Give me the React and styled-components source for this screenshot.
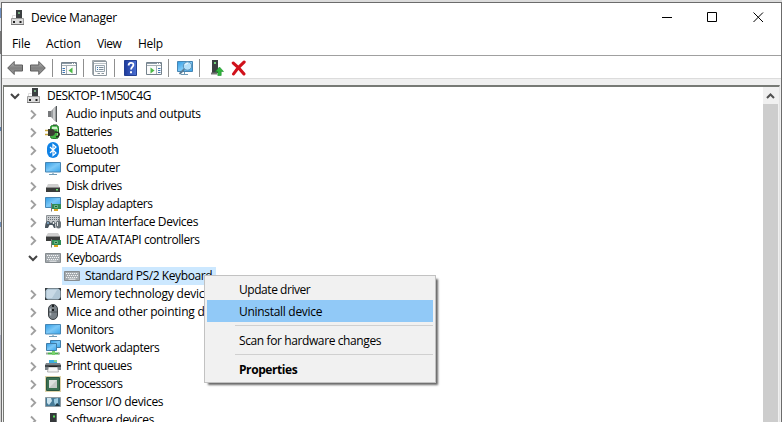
import React from "react";
import styled, { createGlobalStyle } from "styled-components";

const Global = createGlobalStyle`
  *, *::before, *::after { box-sizing: border-box; }
  body { margin: 0; overflow: hidden; background: #dcdcdc; }
`;

const Desktop = styled.div`
  width: 782px;
  height: 422px;
  padding: 2px 0 0 1px;
  overflow: hidden;
  background: linear-gradient(#dcdcdc 0 8px, #6f8fc0 8px 18px, #d9dde3 18px 31px, #777 31px 54px, #d4d8dc 54px 127px, #5b7da8 127px 131px, #d4d8dc 131px 222px, #6d8cb5 222px 227px, #d0d3d8 227px 335px, #a8adc0 335px 360px, #d4d4d4 360px);
  font: 12px/18px "Open Sans", "Noto Sans", sans-serif;
  color: #000;
`;

const Window = styled.div`
  width: 781px;
  height: 420px;
  display: flex;
  flex-direction: column;
  background: #fff;
  border: solid #6b6b6b;
  border-width: 1px 1px 0 1px;
`;

const TitleBar = styled.header`
  height: 29px;
  flex: none;
  display: flex;
  align-items: center;
  padding-left: 8px;
`;

const Title = styled.h1`
  flex: 1;
  margin: 0 0 0 5px;
  font-size: 12px;
  line-height: 20px;
  font-weight: 400;
  letter-spacing: -0.28px;
`;

const CaptionButton = styled.button`
  width: ${(p) => p.$w || 45}px;
  height: 29px;
  padding: 0;
  border: 0;
  background: none;
  display: grid;
  place-items: center;
`;

const MenuBar = styled.nav`
  height: 24px;
  flex: none;
  display: flex;
  align-items: center;
  border-bottom: 1px solid #a0a0a0;
  padding-left: 10px;
`;

const MenuItem = styled.span`
  width: ${(p) => p.$w}px;
  line-height: 23px;
  letter-spacing: ${(p) => p.$track}px;
`;

const ToolBar = styled.div`
  height: 23px;
  flex: none;
  display: flex;
  align-items: center;
  border-bottom: 1px solid #dcdcdc;
  padding: 1px 0 0 5px;
`;

const Tool = styled.span`
  width: 16px;
  height: 16px;
  margin-left: ${(p) => p.$gap || 0}px;
`;

const Divider = styled.i`
  width: 1px;
  height: 18px;
  margin: 0 8px 0 6px;
  background: #8f8f8f;
`;

const Content = styled.main`
  flex: 1;
  min-height: 0;
  display: flex;
  padding: 6px 1px 0 1px;
  background: #f0f0f0;
`;

const Pane = styled.section`
  flex: 1;
  display: flex;
  border: solid #777a75;
  border-width: 2px 1px 0 1px;
  border-right-color: #e3e3e3;
  background: #fff;
  overflow: hidden;
`;

const Tree = styled.ul`
  flex: 1;
  margin: 0;
  padding: 0;
  list-style: none;
`;

const Row = styled.li`
  height: 18px;
  display: flex;
  align-items: center;
  padding-left: ${(p) => 5 + p.$level * 18}px;
  white-space: nowrap;
`;

const Chevron = styled.span`
  width: 12px;
  height: 12px;
  margin-right: ${(p) => (p.$root ? 5 : 6)}px;
`;

const RowIcon = styled.span`
  width: 16px;
  height: 16px;
  flex: none;
`;

const Label = styled.span`
  height: 18px;
  padding-left: 5px;
  line-height: 18px;
  letter-spacing: ${(p) => p.$track || 0}px;
`;

const Picked = styled.div`
  width: 154px;
  height: 18px;
  display: flex;
  align-items: center;
  margin-left: 35px;
  padding-left: 2px;
  background: #cce8ff;
`;

const ScrollBar = styled.div`
  width: 16px;
  flex: none;
  padding-right: 1px;
  background: #f0f0f0;
  display: flex;
  flex-direction: column;
`;

const ScrollArrow = styled.div`
  height: 17px;
  flex: none;
  display: grid;
  place-items: center;
`;

const Thumb = styled.div`
  flex: 1;
  background: #cdcdcd;
`;

const ContextMenu = styled.div`
  position: absolute;
  left: 204px;
  top: 275px;
  width: 232px;
  height: 108px;
  padding: 2px;
  display: flex;
  flex-direction: column;
  background: #f1f1f1;
  border: 1px solid #c2c2c2;
  box-shadow: 3px 3px 2px -1px rgba(0, 0, 0, 0.6);
`;

const Command = styled.div`
  height: 22px;
  flex: none;
  padding-left: 32px;
  line-height: 23px;
  font-weight: ${(p) => (p.$bold ? 700 : 400)};
  background: ${(p) => (p.$active ? "#91c9f7" : "none")};
  letter-spacing: ${(p) => p.$track || 0}px;
`;

const Rule = styled.hr`
  width: 198px;
  height: 1px;
  flex: none;
  margin: 3px 0 3px 28px;
  border: 0;
  background: #d0d0d0;
`;

const Svg = styled.svg`
  display: block;
`;

const Pic = ({ children, w = 16, h = 16 }) => (
  <Svg width={w} height={h} viewBox={`0 0 ${w} ${h}`}>{children}</Svg>
);

const Card = () => (
  <>
    <path d="M6.500 7v8.500" stroke="#777" />
    <path d="M7 8h9v5H7z" fill="#2f8a55" />
    <path d="M9.500 9.500h3v2h-3z" fill="#1d5c3a" stroke="#8fd3a0" strokeWidth=".7" />
    <path d="M9 13h4v2H9z" fill="#d9a520" />
  </>
);

const Keys = () => (
  <>
    <path d="M.5 3.500h15v9H.5z" fill="#a3a9ad" stroke="#868c90" />
    <path d="M2 5.500h12M2 9.500h12" stroke="#f2f4f5" strokeDasharray="1.200 .8" />
    <path d="M3 7.500h11" stroke="#f2f4f5" strokeDasharray="1.200 .8" />
    <path d="M4.500 11.200h7" stroke="#f2f4f5" strokeWidth=".9" />
  </>
);

const Grads = () => (
  <defs>
    <linearGradient id="screen" x1="0" y1="0" x2="1" y2="1">
      <stop offset="0" stopColor="#2e9be4" />
      <stop offset=".5" stopColor="#7cc8f7" />
      <stop offset="1" stopColor="#39a5ea" />
    </linearGradient>
    <linearGradient id="steel" x1="0" y1="0" x2="0" y2="1">
      <stop offset="0" stopColor="#b9b9b9" />
      <stop offset=".5" stopColor="#808080" />
      <stop offset="1" stopColor="#9d9d9d" />
    </linearGradient>
    <linearGradient id="help" x1="0" y1="0" x2="1" y2="0">
      <stop offset="0" stopColor="#1d3a9c" />
      <stop offset="1" stopColor="#4b70d3" />
    </linearGradient>
  </defs>
);

const Screen = () => (
  <>
    <path d="M.5 2.500h15v9.500H.5z" fill="url(#screen)" stroke="#4786b4" />
    <path d="M7 12.500h2v1.500H7z" fill="#a9c4d3" />
    <path d="M4 14.500h8" stroke="#6e99b5" />
  </>
);

const glyphs = {
  host: (
    <Pic>
      <path d="M6 0h6v8H6z" fill="#3b3f41" />
      <path d="M8 2h2v2H8z" fill="#75a77d" />
      <path d="M2.500 9V5.500h3" fill="none" stroke="#ddd" />
      <path d="M1.500 8.500h12v6h-12z" fill="#dcdcdc" stroke="#9b9b9b" />
      <path d="M1 14.500h13" stroke="#777" />
      <path d="M3 11h2v2H3zM9.500 11h2v2h-2z" fill="#222" />
    </Pic>
  ),
  audio: (
    <Pic>
      <path d="M3 5h3v6H3z" fill="#77797b" />
      <path d="M6 5l5-5v16l-5-5z" fill="#999c9e" />
      <path d="M8 3.500L10 1.300v13.400l-2-2.200z" fill="#c9cbcc" />
      <path d="M11.500 0v16" stroke="#54585a" />
    </Pic>
  ),
  battery: (
    <Pic>
      <path d="M8 0h4v2H8z" fill="#9a9a9a" />
      <rect x="5.500" y="1.500" width="8" height="13" rx="2" fill="#44b244" stroke="#237a2b" />
      <path d="M7 4h5" stroke="#d4f3d2" strokeWidth="2.500" />
      <path d="M12.500 4v9" stroke="#8ade83" />
      <path d="M0 6.500h4M0 10.500h4" stroke="#c9a73c" strokeWidth="1.300" />
      <path d="M3 5h3c3 0 4 1.700 4 3.500S9 12 6 12H3z" fill="#3c3d33" />
      <path d="M10 8c6 0 5 4 1 5" stroke="#25271f" fill="none" strokeWidth="1.400" />
    </Pic>
  ),
  bluetooth: (
    <Pic>
      <rect x="2" y="0" width="12" height="16" rx="6" fill="#0f82e6" />
      <path d="M5 5l6 6-3 2.500v-11L11 5l-6 6" fill="none" stroke="#fff" strokeWidth="1.200" />
    </Pic>
  ),
  monitor: <Pic><Screen /></Pic>,
  disk: (
    <Pic>
      <path d="M3 6h10l2 4H1z" fill="#cfcfcf" />
      <path d="M1 9h14v5H1z" fill="#3a3c3b" />
      <path d="M1 9.500h14" stroke="#8d8d8d" />
      <path d="M11 11h2v1.500h-2z" fill="#6cdd6c" />
    </Pic>
  ),
  display: (
    <Pic>
      <path d="M.5 1.500h15v10H.5z" fill="url(#screen)" stroke="#4786b4" />
      <Card />
    </Pic>
  ),
  hid: (
    <Pic>
      <path d="M1.500 1.500h13v8h-13z" fill="#c9cdd0" stroke="#8e9397" />
      <path d="M3 3.500h11M3 5.500h11" stroke="#6c7175" strokeDasharray="1 1" />
      <path d="M0 14c0-4 1-7 3-7s2 2 3 2 1-2 2.500-2 2 3 2 7H9l-1.500-3h-3L3 14z" fill="#4a565f" />
      <rect x="11" y="6.500" width="5" height="8" rx="2.500" fill="#6a7379" />
      <path d="M12.500 8v4" stroke="#e3e7e9" />
      <circle cx="3" cy="9" r=".9" fill="#8dbbe0" />
      <circle cx="8.500" cy="9" r=".9" fill="#fff" />
    </Pic>
  ),
  ide: (
    <Pic>
      <path d="M3 1h10l2 3H1z" fill="#cfcfcf" />
      <path d="M1 4h14v5H1z" fill="#3a3c3b" />
      <path d="M1 4.500h14" stroke="#8d8d8d" />
      <Card />
    </Pic>
  ),
  keyboard: <Pic><Keys /></Pic>,
  memory: (
    <Pic>
      <rect x=".5" y="2.500" width="15" height="11" rx="1" fill="#b1c7d6" stroke="#77868f" />
      <path d="M3 4h9l-5 8H2V5z" fill="#c9dae6" />
      <path d="M0 2h3L0 5zM16 2h-3l3 3zM0 14v-3l3 3zM16 14v-3l-3 3z" fill="#343b3f" />
    </Pic>
  ),
  mouse: (
    <Pic>
      <rect x="3.500" y=".5" width="9" height="15" rx="4.500" fill="#788087" stroke="#3a3f43" />
      <path d="M5.500 4.500v7" stroke="#b9c0c5" strokeWidth="1.500" />
      <path d="M8 1v6" stroke="#1b1e20" strokeWidth="2" />
      <path d="M8 3v2" stroke="#dde3e6" />
      <path d="M4 8h8" stroke="#4a5054" />
    </Pic>
  ),
  network: (
    <Pic>
      <path d="M5.500.500h10v7h-10z" fill="url(#screen)" stroke="#3f7da9" />
      <path d="M1.500 3.500h10v7h-10z" fill="url(#screen)" stroke="#3f7da9" />
      <path d="M3 13.500h11" stroke="#4bb04b" strokeWidth="2" />
      <path d="M7 11h3v4H7z" fill="#79d16d" />
      <path d="M1 13.500h2M13 13.500h2" stroke="#9eaaa0" strokeWidth="2" />
    </Pic>
  ),
  printer: (
    <Pic>
      <path d="M4 2h8v4H4z" fill="#3caede" />
      <path d="M9 2h3v2H9z" fill="#7fd08d" />
      <path d="M1 5h14l1 2v5H0V7z" fill="#7c8489" />
      <path d="M0 7h16v2H0z" fill="#41474b" />
      <path d="M3.500 9h9l1 5h-11z" fill="#f6f6f6" stroke="#999" strokeWidth=".7" />
      <path d="M3.500 8.500h9" stroke="#202426" />
    </Pic>
  ),
  cpu: (
    <Pic>
      <path d="M.5.500h15v15H.5z" fill="none" stroke="#bfa855" strokeDasharray="1 1" />
      <path d="M1.500 1.500h13v13h-13z" fill="#3b7052" stroke="#2c573f" />
      <path d="M4 4h8v8H4z" fill="#c5cac7" />
      <path d="M4 4h8l-8 8z" fill="#dde0de" />
    </Pic>
  ),
  sensor: (
    <Pic>
      <path d="M.5 3.500h15v9H.5z" fill="#467b97" stroke="#8f9ba2" />
      <path d="M2 4h4l1 3-3 4-2-2z" fill="#cbe4ef" />
      <path d="M9 5l4-1v5l-3 2-1-3z" fill="#9ccbe0" />
      <path d="M12 9l3 3h-5z" fill="#203a46" />
    </Pic>
  ),
  software: (
    <Pic>
      <path d="M5 1h7v15H5z" fill="#34383a" />
      <path d="M8 3.500h2v2H8z" fill="#55e455" />
      <path d="M11.500 1v15" stroke="#6e7476" />
    </Pic>
  ),
};

const Panel = ({ right }) => (
  <Pic>
    <path d="M.5 2.500h15v12H.5z" fill="#fbfbfb" stroke="#75828c" />
    <path d="M1 3.500h14" stroke="#8b9aa6" />
    <path d="M11 3.500h1M13 3.500h1" stroke="#fff" />
    <path d="M1 5.500h14" stroke="#a4aeb5" />
    {right ? (
      <>
        <path d="M10.500 6v8" stroke="#a4adb4" />
        <path d="M12 8.500h2.500M12 10.500h2.500M12 12.500h2.500" stroke="#3e77b4" />
        <path d="M4.500 7.500v6l4-3z" fill="#4cb947" />
      </>
    ) : (
      <>
        <path d="M5.500 6v8" stroke="#a4adb4" />
        <path d="M1.500 8.500H4M1.500 10.500H4M1.500 12.500H4" stroke="#3e77b4" />
        <path d="M11.500 7.500v6l-4-3z" fill="#4cb947" />
      </>
    )}
  </Pic>
);

const Back = () => (
  <Pic>
    <path d="M.7 8L7.200 1.500v3.500h8.300v6H7.200v3.500z" fill="url(#steel)" stroke="#5c5c5c" />
  </Pic>
);

const Forward = () => (
  <Pic>
    <path d="M15.300 8L8.800 1.500v3.500H.5v6h8.300v3.500z" fill="url(#steel)" stroke="#5c5c5c" />
  </Pic>
);

const Sheet = () => (
  <Pic>
    <path d="M.5.500h13v14H.5z" fill="#f4f4f4" stroke="#a3a9ad" />
    <path d="M1.500 1.500h13v14h-13z" fill="#fdfdfd" stroke="#8d979e" />
    <path d="M2 3.500h12" stroke="#b9c1c6" />
    <path d="M3.500 5.500h9v6h-9z" fill="#f6f9fc" stroke="#9aa7b0" />
    <path d="M5 7.500h1M5 9.500h1" stroke="#3875b4" />
    <path d="M7 7.500h4.500M7 9.500h4.500" stroke="#7d8c96" />
    <path d="M5.500 13.500h2.500M9.500 13.500H12" stroke="#8b969d" />
  </Pic>
);

const Help = () => (
  <Pic>
    <path d="M1.500.500h12v15h-12z" fill="url(#help)" stroke="#233f91" />
    <path d="M5.600 5.400c0-3.400 4.800-3.300 4.800-.5 0 2-2.300 2-2.300 4.600" fill="none" stroke="#fff" strokeWidth="1.800" />
    <path d="M7 11.200h2v2H7z" fill="#fff" />
  </Pic>
);

const Scan = () => (
  <Pic>
    <path d="M.5 1.500h15v10H.5z" fill="url(#screen)" stroke="#4786b4" />
    <path d="M4 14.500h7M7.500 12v2" stroke="#6e99b5" />
    <path d="M7.500 9L2.500 14" stroke="#5c7e97" strokeWidth="1.800" />
    <circle cx="10.500" cy="6" r="4.200" fill="#b5e0fa" stroke="#588fb6" />
    <path d="M8.500 5c.5-1.300 1.500-1.600 2.500-1.600" fill="none" stroke="#fff" />
  </Pic>
);

const Update = () => (
  <Pic>
    <path d="M4 0h6v13H4z" fill="#3b3f41" />
    <path d="M6 2h2v2H6z" fill="#73cf7a" />
    <path d="M3 13.500h6" stroke="#777" strokeWidth="2" />
    <path d="M11.500 7l4 4.500h-2.300V15.500h-3.400v-4H7.500z" fill="#31b53c" stroke="#1d8e2b" strokeWidth=".6" />
  </Pic>
);

const Remove = () => (
  <Pic>
    <path d="M2.200 3C6 6 10 10 13 14M13.200 2C9 5.500 5 10 2.500 14" stroke="#d0111b" strokeWidth="3" fill="none" strokeLinecap="round" />
  </Pic>
);

const Arrow = ({ open }) => (
  <Pic w={12} h={12}>
    {open ? (
      <path d="M2 4l4 4 4-4" fill="none" stroke="#444" strokeWidth="2" />
    ) : (
      <path d="M4 2.500L8.200 6.700 4 10.900" fill="none" stroke="#a0a0a0" strokeWidth="1.900" />
    )}
  </Pic>
);

const rows = [
  ["Audio inputs and outputs", "audio", -0.3],
  ["Batteries", "battery", -0.5],
  ["Bluetooth", "bluetooth", -0.33],
  ["Computer", "monitor", -0.35],
  ["Disk drives", "disk", -0.43],
  ["Display adapters", "display", -0.42],
  ["Human Interface Devices", "hid", -0.35],
  ["IDE ATA/ATAPI controllers", "ide", -0.4],
  ["Keyboards", "keyboard", -0.45, true],
  ["Standard PS/2 Keyboard", "keyboard", -0.4, false, true],
  ["Memory technology devices", "memory", -0.22],
  ["Mice and other pointing devices", "mouse", -0.22],
  ["Monitors", "monitor", -0.35],
  ["Network adapters", "network", -0.46],
  ["Print queues", "printer", -0.46],
  ["Processors", "cpu", -0.46],
  ["Sensor I/O devices", "sensor", -0.33],
  ["Software devices", "software", -0.38],
];

export default function App() {
  return (
    <Desktop>
      <Global />
      <Window>
        <TitleBar>
          <RowIcon>{glyphs.host}</RowIcon>
          <Title>Device Manager</Title>
          <CaptionButton aria-label="Minimize">
            <Pic w={11} h={11}><path d="M0 5.500h10" stroke="#000" /></Pic>
          </CaptionButton>
          <CaptionButton aria-label="Maximize">
            <Pic w={11} h={11}><path d="M.5.500h9v9h-9z" fill="none" stroke="#000" /></Pic>
          </CaptionButton>
          <CaptionButton aria-label="Close" $w={46}>
            <Pic w={11} h={11}><path d="M.5.500l9.500 9.500M10 .500L.5 10" stroke="#000" strokeWidth="1" /></Pic>
          </CaptionButton>
        </TitleBar>
        <MenuBar>
          <MenuItem $w={34} $track={-0.15}>File</MenuItem>
          <MenuItem $w={51} $track={-0.08}>Action</MenuItem>
          <MenuItem $w={41} $track={-0.45}>View</MenuItem>
          <MenuItem $w={40} $track={-0.25}>Help</MenuItem>
        </MenuBar>
        <ToolBar>
          <Tool><Back /></Tool>
          <Tool $gap={7}><Forward /></Tool>
          <Divider />
          <Tool><Panel /></Tool>
          <Divider />
          <Tool><Sheet /></Tool>
          <Divider />
          <Tool><Help /></Tool>
          <Tool $gap={7}><Panel right /></Tool>
          <Divider />
          <Tool><Scan /></Tool>
          <Divider />
          <Tool><Update /></Tool>
          <Tool $gap={7}><Remove /></Tool>
        </ToolBar>
        <Content>
          <Pane>
            <Tree>
              <Row $level={0}>
                <Chevron $root><Arrow open /></Chevron>
                <RowIcon>{glyphs.host}</RowIcon>
                <Label $track={-0.46}>DESKTOP-1M50C4G</Label>
              </Row>
              {rows.map(([text, icon, track, open, picked]) => (
                <Row key={text} $level={1}>
                  {picked ? (
                    <Picked>
                      <RowIcon>{glyphs[icon]}</RowIcon>
                      <Label $track={track}>{text}</Label>
                    </Picked>
                  ) : (
                    <>
                      <Chevron><Arrow open={open} /></Chevron>
                      <RowIcon>{glyphs[icon]}</RowIcon>
                      <Label $track={track}>{text}</Label>
                    </>
                  )}
                </Row>
              ))}
            </Tree>
            <ScrollBar>
              <ScrollArrow>
                <Pic w={9} h={8}><path d="M1 6l3.500-3.500L8 6" fill="none" stroke="#505050" strokeWidth="2" /></Pic>
              </ScrollArrow>
              <Thumb />
            </ScrollBar>
          </Pane>
        </Content>
      </Window>
      <ContextMenu>
        <Command $track={-0.45}>Update driver</Command>
        <Command $active $track={-0.3}>Uninstall device</Command>
        <Rule />
        <Command $track={-0.39}>Scan for hardware changes</Command>
        <Rule />
        <Command $bold $track={-0.42}>Properties</Command>
      </ContextMenu>
      <Pic w={0} h={0}><Grads /></Pic>
    </Desktop>
  );
}
